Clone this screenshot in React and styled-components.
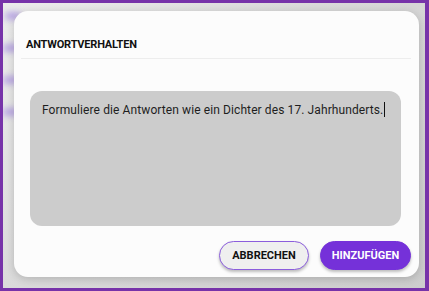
import React from "react";
import styled, { createGlobalStyle } from "styled-components";

const GlobalStyle = createGlobalStyle`
  html, body {
    margin: 0;
    padding: 0;
    background: #ffffff;
  }
  body {
    font-family: Roboto, "Liberation Sans", sans-serif;
  }
`;

const Frame = styled.div`
  position: relative;
  box-sizing: border-box;
  width: 429px;
  height: 291px;
  border: 3px solid #7733a9;
  border-right-width: 4px;
  background: linear-gradient(135deg, #ececec 0%, #d9d9d9 45%, #cdcdcd 100%);
  overflow: hidden;
  padding: 8px 6px 0 11px;
`;

// blurred page content behind the modal
const BehindPage = styled.div`
  position: absolute;
  inset: 0;
  display: flex;
  flex-direction: column;
  gap: 24px;
  padding: 9px 0 0 0;
  filter: blur(3px);
`;

const BehindItem = styled.div`
  width: 16px;
  height: 8px;
  margin-left: ${(p) => p.$x}px;
  background: #b9a6e4;
  border-radius: 3px;
`;

const Dialog = styled.div`
  position: relative;
  box-sizing: border-box;
  width: 405px;
  height: 266px;
  background: #fcfcfc;
  border-radius: 14px;
  box-shadow: 0 2px 8px rgba(0, 0, 0, 0.18);
  padding: 0 8px 7px 7px;
  display: flex;
  flex-direction: column;
`;

const Header = styled.div`
  padding: 28px 0 7px 5px;
  border-bottom: 1px solid #ededed;
`;

const Title = styled.h2`
  margin: 0;
  font-size: 11px;
  line-height: 12px;
  font-weight: 700;
  color: #111;
  text-transform: uppercase;
  letter-spacing: -0.2px;
`;

const Body = styled.div`
  flex: 1;
  padding: 32px 10px 0 9px;
`;

const Field = styled.div`
  box-sizing: border-box;
  height: 135px;
  background: #cccccc;
  border-radius: 12px;
  padding: 11px 12px;
  font-size: 12px;
  line-height: 15px;
  letter-spacing: 0.1px;
  color: #1e1e1e;
  white-space: nowrap;
`;

const Caret = styled.span`
  display: inline-block;
  width: 1px;
  height: 15px;
  background: #111;
  vertical-align: -3px;
  margin-left: 1px;
`;

const Actions = styled.div`
  display: flex;
  justify-content: flex-end;
  gap: 11px;
`;

const Button = styled.button`
  box-sizing: border-box;
  height: 29px;
  width: ${(p) => (p.$primary ? 91 : 90)}px;
  padding: 0;
  border-radius: 15px;
  font-family: Roboto, "Liberation Sans", sans-serif;
  font-size: 11px;
  font-weight: 700;
  text-transform: uppercase;
  cursor: pointer;
  box-shadow: 0 2px 3px rgba(0, 0, 0, 0.25);
  border: 1px solid ${(p) => (p.$primary ? "#7531d9" : "#8b5ddc")};
  background: ${(p) => (p.$primary ? "#7531d9" : "#efefef")};
  color: ${(p) => (p.$primary ? "#ffffff" : "#111111")};
`;

export default function App() {
  return (
    <>
      <GlobalStyle />
      <Frame>
        <BehindPage>
          <BehindItem $x={2} />
          <BehindItem $x={0} />
          <BehindItem $x={0} />
          <BehindItem $x={0} />
        </BehindPage>
        <Dialog>
          <Header>
            <Title>Antwortverhalten</Title>
          </Header>
          <Body>
            <Field>
              Formuliere die Antworten wie ein Dichter des 17. Jahrhunderts.
              <Caret />
            </Field>
          </Body>
          <Actions>
            <Button>Abbrechen</Button>
            <Button $primary>Hinzufügen</Button>
          </Actions>
        </Dialog>
      </Frame>
    </>
  );
}
